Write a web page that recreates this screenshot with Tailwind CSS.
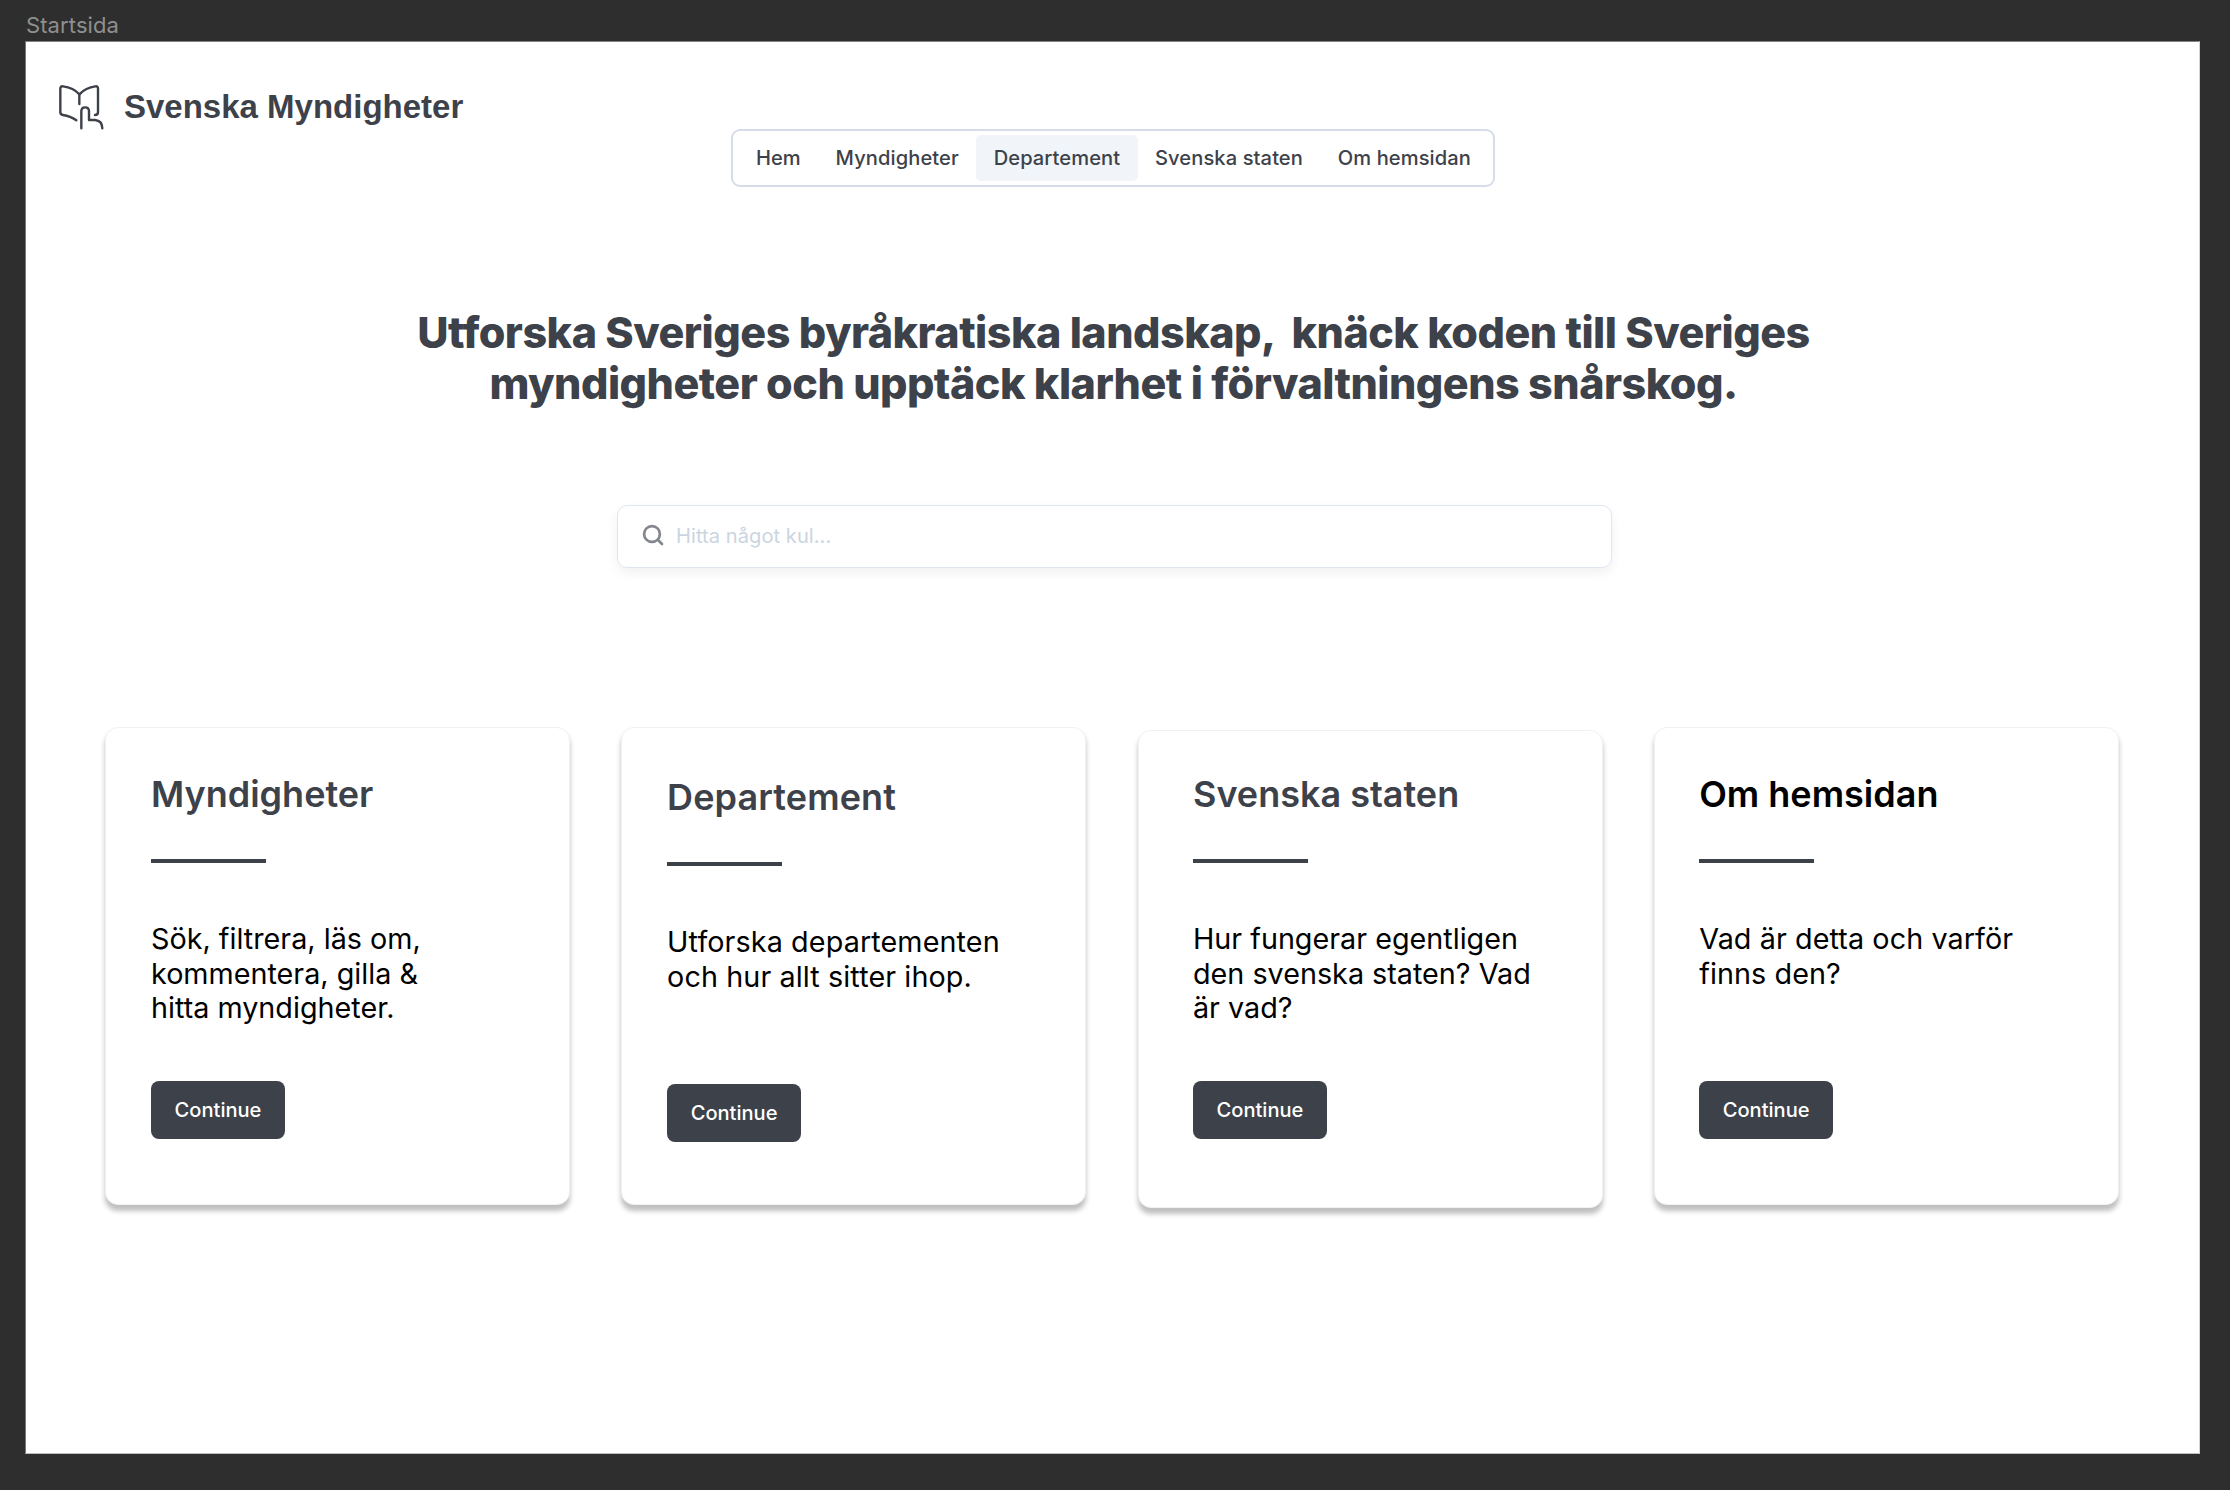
<!DOCTYPE html>
<html lang="sv">
<head>
<meta charset="utf-8">
<title>Startsida</title>
<script src="https://cdn.jsdelivr.net/npm/@tailwindcss/browser@4"></script>
</head>
<body class="h-[1490px] w-[2230px] overflow-hidden bg-[#2e2e2e] pl-[25px] font-['Inter',sans-serif] text-[#3d4149]">
  <div class="flex h-[41px] items-start pl-[1px] pt-[9px] text-[22px] leading-[32px] tracking-[0.1px] text-[#8f8f8f]">Startsida</div>
  <div class="flex h-[1413px] w-[2175px] flex-col border border-t-[#828282] border-l-[#767676] border-r-[#d4d4d4] border-b-[#bcc0bc] bg-white pt-[40px]">
    <header class="flex flex-col">
      <div class="flex h-[48px] items-center gap-[19px] pl-[31px]">
        <svg class="mt-px h-[48px] w-[48px]" viewBox="170 248 144 144" fill="none" stroke="#3d4149" stroke-width="7.200" stroke-linecap="round" stroke-linejoin="round">
          <path d="M228 360C217 352 203 346 188 344Q180 343 180 336V265Q180 257 188 258C205 260 225 268 237 282C250 268 268 260 285 258Q293 257 293 265V336Q293 344 284 344"/>
          <path d="M237 282V311"/>
          <path d="M243 384V333Q243 321 254.500 321Q266 321 266 333V359H284Q306 361 306 384"/>
        </svg>
        <div class="pt-[2px] font-['Liberation_Sans',sans-serif] text-[33px] font-bold leading-[48px]">Svenska Myndigheter</div>
      </div>
      <nav class="-mt-px flex h-[58px] w-[764px] items-center self-center rounded-[9px] border-2 border-[#d6dce8] pl-[6px] text-[20.1px] font-medium leading-[46px] tracking-[0.1px]">
        <a class="rounded-[5px] px-[17.4px]">Hem</a>
        <a class="rounded-[5px] px-[17.4px]">Myndigheter</a>
        <a class="rounded-[5px] bg-[#f1f5f9] px-[17.4px]">Departement</a>
        <a class="rounded-[5px] px-[17.4px]">Svenska staten</a>
        <a class="rounded-[5px] px-[17.4px]">Om hemsidan</a>
      </nav>
    </header>

    <h1 class="mt-[120px] self-center whitespace-pre pl-[2px] text-center text-[43.1px] font-extrabold leading-[50.5px] tracking-[-0.53px]">Utforska Sveriges byråkratiska landskap,  knäck koden till Sveriges
myndigheter och upptäck klarhet i förvaltningens snårskog.</h1>

    <div class="ml-[591px] mt-[97px] flex h-[63px] w-[995px] items-center gap-[10px] rounded-[10px] border border-[#dfe6ef] pb-[2px] pl-[24px] shadow-[0_5px_12px_rgba(0,0,0,0.06)]">
      <svg class="h-[24px] w-[24px]" viewBox="0 0 24 24" fill="none" stroke="#84868f" stroke-width="2.700" stroke-linecap="round">
        <circle cx="10" cy="10" r="7.900"/>
        <path d="M16 16l4 4"/>
      </svg>
      <span class="text-[20.1px] leading-[30px] tracking-[0.05px] text-[#cbd5e1]">Hitta något kul...</span>
    </div>

    <main class="mt-[159px] flex items-start gap-[51.4px] pl-[79px]">
      <section class="h-[478px] w-[465px] shrink-0 rounded-[13px] border border-[#f1f1f1] bg-white pl-[45px] pt-[48px] shadow-[0_5.75px_5.75px_rgba(0,0,0,0.25)]">
        <h2 class="text-[36px] font-semibold leading-[36px]">Myndigheter</h2>
        <div class="mt-[47px] h-[4px] w-[115px] bg-[#3d4149]"></div>
        <p class="mt-[59px] h-[103px] whitespace-nowrap text-[28.75px] leading-[34.5px] text-black">Sök, filtrera, läs om,<br>kommentera, gilla &amp;<br>hitta myndigheter.</p>
        <button class="mt-[56px] block h-[58px] w-[134px] rounded-[8px] bg-[#3d4149] text-[20.1px] font-medium leading-[58px] text-white">Continue</button>
      </section>
      <section class="h-[478px] w-[465px] shrink-0 rounded-[13px] border border-[#f1f1f1] bg-white pl-[44.700px] pt-[51px] shadow-[0_5.75px_5.75px_rgba(0,0,0,0.25)]">
        <h2 class="text-[36px] font-semibold leading-[36px] tracking-[0.1px]">Departement</h2>
        <div class="mt-[47px] h-[4px] w-[115px] bg-[#3d4149]"></div>
        <p class="mt-[59px] h-[103px] whitespace-nowrap text-[28.75px] leading-[34.5px] tracking-[0.1px] text-black">Utforska departementen<br>och hur allt sitter ihop.</p>
        <button class="mt-[56px] block h-[58px] w-[134px] rounded-[8px] bg-[#3d4149] text-[20.1px] font-medium leading-[58px] text-white">Continue</button>
      </section>
      <section class="mt-[3px] h-[478px] w-[465px] shrink-0 rounded-[13px] border border-[#f1f1f1] bg-white pl-[54.200px] pt-[45px] shadow-[0_5.75px_5.75px_rgba(0,0,0,0.25)]">
        <h2 class="text-[36px] font-semibold leading-[36px]">Svenska staten</h2>
        <div class="mt-[47px] h-[4px] w-[115px] bg-[#3d4149]"></div>
        <p class="mt-[59px] h-[103px] whitespace-nowrap text-[28.75px] leading-[34.5px] text-black">Hur fungerar egentligen<br>den svenska staten? Vad<br>är vad?</p>
        <button class="mt-[56px] block h-[58px] w-[134px] rounded-[8px] bg-[#3d4149] text-[20.1px] font-medium leading-[58px] text-white">Continue</button>
      </section>
      <section class="h-[478px] w-[465px] shrink-0 rounded-[13px] border border-[#f1f1f1] bg-white pl-[44px] pt-[48px] shadow-[0_5.75px_5.75px_rgba(0,0,0,0.25)]">
        <h2 class="text-[36px] font-semibold leading-[36px] text-black">Om hemsidan</h2>
        <div class="mt-[47px] h-[4px] w-[115px] bg-[#3d4149]"></div>
        <p class="mt-[59px] h-[103px] whitespace-nowrap text-[28.75px] leading-[34.5px] tracking-[0.08px] text-black">Vad är detta och varför<br>finns den?</p>
        <button class="mt-[56px] block h-[58px] w-[134px] rounded-[8px] bg-[#3d4149] text-[20.1px] font-medium leading-[58px] text-white">Continue</button>
      </section>
    </main>
  </div>
</body>
</html>
